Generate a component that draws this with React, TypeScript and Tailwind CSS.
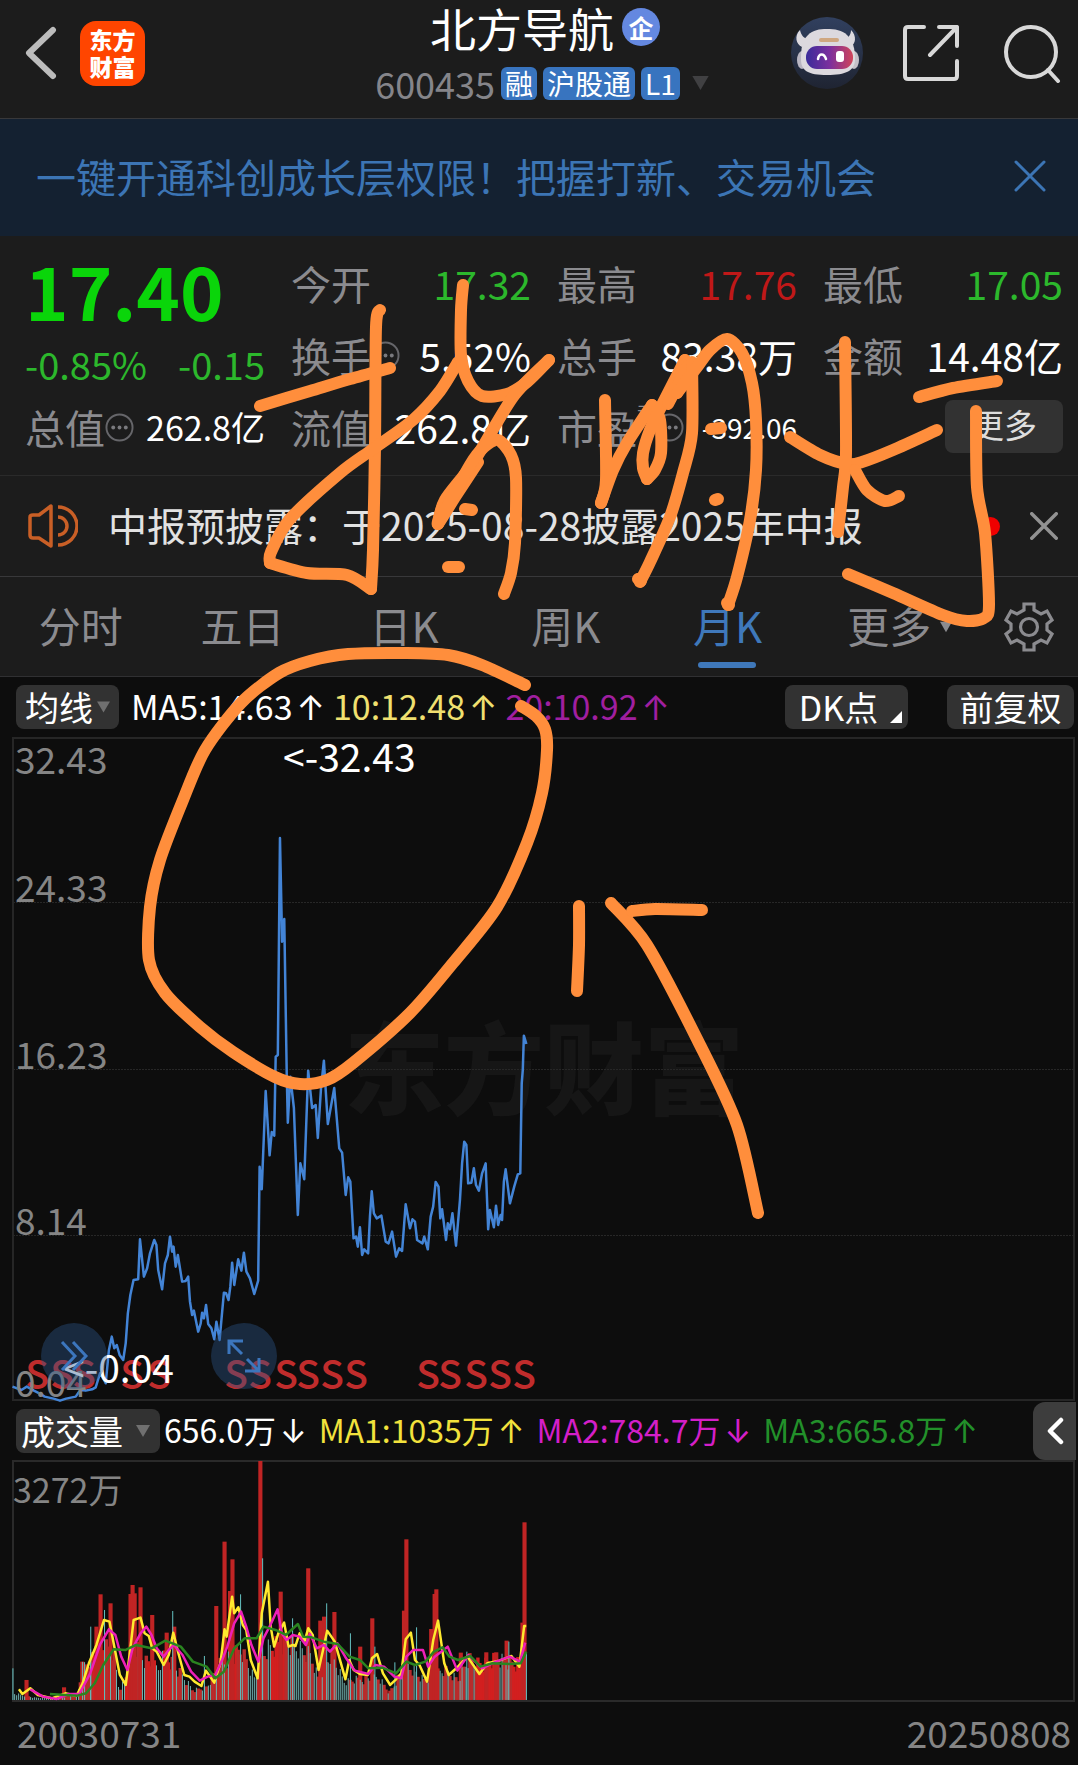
import { useState, type ReactNode } from 'react'

type Point = [number, number]

const TABS = ['分时', '五日', '日K', '周K', '月K']

// price line, 2.8 units per px across, 3 units per px down, origin at y=1050
const PRICE_LINE =
    '35,1010 60,1020 75,1010 95,1022 110,1030 125,1040 150,1046 168,1052 185,1046 212,1040 225,1020 240,1022 258,1018 268,1012 280,970 290,985 296,1000 305,900 313,860 320,895 327,885 335,915 345,930 352,880 358,790 365,735 374,690 387,688 392,568 403,680 412,655 420,610 432,570 438,585 443,660 454,718 462,640 470,615 476,560 482,605 486,590 492,650 498,615 510,695 520,693 527,680 532,755 538,795 543,782 555,845 562,820 566,788 571,805 577,765 583,822 592,835 600,868 606,815 615,870 627,728 633,730 640,750 645,710 650,638 656,705 667,628 676,662 683,608 690,665 700,685 712,732 723,692 727,350 733,418 744,123 755,316 761,246 768,257 772,20 778,15 784,-636 790,-325 796,-393 803,75 806,218 813,80 823,174 834,495 841,340 852,388 863,62 874,174 884,165 890,264 899,114 907,32 918,222 936,114 950,295 958,308 968,435 975,382 981,395 990,565 997,560 1002,590 1008,532 1014,615 1020,598 1031,610 1036,500 1041,424 1047,490 1055,505 1068,497 1080,575 1088,580 1098,545 1109,620 1118,595 1126,603 1136,463 1148,535 1155,508 1162,515 1168,570 1183,580 1188,560 1198,598 1206,500 1213,470 1220,396 1228,410 1233,505 1238,478 1249,570 1254,520 1260,538 1267,490 1277,587 1288,450 1294,340 1300,275 1306,285 1311,400 1320,398 1327,355 1333,405 1341,422 1350,370 1360,340 1367,538 1372,480 1383,532 1389,467 1395,525 1402,495 1406,510 1411,395 1416,358 1428,460 1440,410 1450,373 1457,370 1461,100 1464,60 1467,-43 1474,-18'

const SELL_MARKS = [37, 62, 84, 132, 159, 236, 260, 286, 308, 332, 356, 428, 450, 476, 500, 524]

// volume data, 2.904 units per px across, 3 units per px down, origin at y=1400
const VOL_RED: Point[] = [
    [77, 840], [186, 862], [239, 785], [280, 680], [292, 583], [321, 610], [379, 582], [385, 555], [391, 580],
    [408, 562], [442, 645], [484, 698], [506, 680], [628, 618], [652, 425], [668, 573], [675, 478], [756, 183],
    [815, 575], [895, 505], [930, 662], [941, 650], [971, 636], [1046, 740], [1081, 655], [1173, 632], [1180, 418],
    [1252, 687], [1262, 582], [1267, 568], [1338, 758], [1412, 757], [1441, 757], [1471, 722], [1517, 668], [1523, 367],
]

const VOL_TEAL: Point[] = [
    [37, 805], [263, 680], [303, 630], [501, 633], [593, 768], [698, 583], [762, 475], [849, 655], [948, 610],
    [1017, 700], [1088, 740], [1146, 787], [1209, 682], [1355, 755], [1477, 725], [1528, 758],
]

const VOL_BASE: Point[] = [
    [40, 880], [100, 893], [180, 893], [225, 880], [240, 800], [290, 740], [330, 760], [345, 870], [365, 840],
    [385, 730], [420, 790], [460, 810], [480, 760], [520, 810], [560, 870], [600, 860], [640, 790], [700, 750],
    [740, 840], [770, 750], [830, 730], [900, 770], [925, 840], [960, 770], [1000, 850], [1040, 840], [1100, 830],
    [1130, 880], [1180, 790], [1230, 840], [1290, 810], [1330, 840], [1360, 780], [1400, 800], [1440, 780],
    [1500, 800], [1528, 760],
]

const SOLID_RED = [[272, 300], [366, 396], [430, 448], [474, 500], [664, 690], [785, 830], [1255, 1275], [1385, 1435], [1488, 1528]]
const ALL_TEAL = [[36, 70], [90, 170], [450, 470], [716, 740], [850, 872], [978, 1005]]

const MA1_LINE =
    '55,868 65,882 88,865 110,885 150,895 190,880 222,888 240,850 258,790 280,735 302,660 318,665 330,730 348,825 365,855 378,750 388,660 408,653 420,700 432,708 442,745 455,755 475,795 490,765 503,698 518,760 535,825 550,830 565,845 585,858 598,812 622,848 640,790 652,688 658,710 674,590 680,640 692,622 705,675 715,690 728,780 748,835 760,640 778,545 786,680 796,740 808,700 825,668 838,740 850,735 858,738 870,700 885,722 895,685 908,705 925,810 938,750 950,692 972,725 990,790 1003,838 1014,780 1027,810 1045,822 1068,825 1080,775 1095,762 1112,820 1133,855 1150,838 1165,820 1178,718 1193,698 1205,780 1218,795 1240,845 1258,720 1272,662 1290,790 1303,825 1325,805 1357,770 1392,822 1415,790 1450,782 1485,768 1508,800 1522,678 1528,678'
const MA2_LINE =
    '88,868 125,890 165,897 200,882 230,882 262,820 290,735 316,688 335,705 352,770 370,810 385,745 408,700 425,680 440,705 455,745 475,770 490,750 505,735 530,765 555,815 580,842 603,830 625,825 645,780 660,740 680,670 700,635 715,680 730,735 750,785 765,715 785,675 806,628 818,700 832,720 850,705 870,710 888,735 900,702 920,745 940,735 958,755 980,730 1005,775 1030,812 1070,822 1090,795 1115,800 1145,830 1165,835 1180,770 1200,750 1228,750 1243,800 1262,770 1300,740 1328,812 1360,765 1400,805 1440,785 1480,770 1510,785 1525,728'
const MA3_LINE =
    '145,882 190,885 225,887 250,880 275,850 300,795 330,748 365,750 395,735 440,745 480,722 525,740 560,785 600,800 625,835 650,815 680,745 710,715 745,715 765,680 800,690 830,705 865,672 880,710 905,712 940,725 980,732 1015,770 1045,780 1070,805 1110,803 1150,820 1180,785 1205,795 1235,785 1260,755 1285,742 1305,770 1330,780 1365,768 1395,800 1430,790 1480,792 1512,790 1528,755'

const INK: Point[][] = [
    [[260, 406], [310, 391], [350, 379], [390, 368]],
    [[380, 310], [376, 327], [375, 447], [373, 550], [371, 589]],
    [[371, 589], [347, 575], [307, 573], [270, 563]],
    [[270, 563], [271, 552], [290, 519], [340, 473], [373, 449], [413, 420], [440, 391], [458, 362]],
    [[463, 285], [461, 310], [461, 355], [468, 381], [482, 396], [507, 394], [527, 382], [549, 360]],
    [[549, 360], [513, 397], [473, 463], [445, 500], [438, 524]],
    [[442, 508], [438, 524], [455, 497], [478, 462]],
    [[438, 524], [470, 465], [484, 447], [498, 440], [511, 455], [516, 478], [515, 543], [511, 573], [504, 594]],
    [[465, 509], [472, 510]],
    [[448, 567], [459, 567]],
    [[605, 400], [606, 480], [601, 503]],
    [[601, 503], [613, 470], [627, 443], [652, 405]],
    [[652, 405], [660, 420], [661, 453], [655, 470], [647, 479]],
    [[647, 479], [643, 468], [643, 453], [650, 430], [663, 403], [685, 360]],
    [[685, 360], [677, 393]],
    [[668, 404], [688, 366]],
    [[692, 362], [692, 433], [683, 473], [670, 517], [650, 562], [640, 582]],
    [[638, 579], [641, 581]],
    [[677, 393], [697, 367], [710, 350], [727, 339], [742, 353], [752, 383], [756, 420], [756, 470], [750, 520], [737, 577], [728, 605]],
    [[727, 603], [729, 605]],
    [[711, 429], [721, 428]],
    [[715, 500], [718, 499]],
    [[790, 437], [820, 455], [847, 464], [862, 462], [893, 450], [937, 430]],
    [[845, 342], [846, 453], [843, 487], [838, 532]],
    [[855, 470], [867, 490], [885, 501], [899, 496]],
    [[919, 397], [953, 388], [997, 381]],
    [[976, 411], [977, 487], [985, 533], [989, 605], [984, 618], [967, 621], [943, 615], [893, 593], [848, 574]],
    [[525, 685], [482, 665], [448, 655], [406, 653], [348, 654], [310, 661], [279, 673], [241, 703], [205, 750], [183, 800], [160, 860], [150, 907], [149, 960], [165, 993], [200, 1027], [233, 1052], [275, 1077], [300, 1084], [327, 1080], [353, 1063], [410, 1013], [453, 963], [497, 907], [527, 843], [542, 793], [547, 750], [545, 729], [536, 716], [521, 706]],
    [[579, 906], [579, 945], [577, 991]],
    [[611, 903], [647, 945], [698, 1041], [737, 1125], [758, 1213]],
    [[632, 911], [655, 909], [702, 910]],
]

function smoothPath(points: Point[]) {
    let d = `M${points[0][0]} ${points[0][1]}`
    for (let i = 0; i < points.length - 1; i++) {
        const prev = points[i - 1] ?? points[i]
        const a = points[i]
        const b = points[i + 1]
        const next = points[i + 2] ?? b
        d += `C${a[0] + (b[0] - prev[0]) / 7} ${a[1] + (b[1] - prev[1]) / 7} ${b[0] - (next[0] - a[0]) / 7} ${b[1] - (next[1] - a[1]) / 7} ${b[0]} ${b[1]}`
    }
    return d
}

function baseAt(x: number) {
    for (let i = 1; i < VOL_BASE.length; i++) {
        const [x0, y0] = VOL_BASE[i - 1]
        const [x1, y1] = VOL_BASE[i]
        if (x <= x1) return y0 + ((y1 - y0) * (x - x0)) / (x1 - x0)
    }
    return 800
}

const inside = (ranges: number[][], x: number) => ranges.some(([from, to]) => x >= from && x <= to)

const fillBars = Array.from({ length: 256 }, (_, i) => {
    const x = 42 + i * 5.8
    const noise = ((i * 73 + 29) % 97) / 97
    const red = inside(SOLID_RED, x) || (!inside(ALL_TEAL, x) && (i * 37 + 11) % 53 < 27)
    const height = (900 - baseAt(x)) * (0.75 + noise * 0.5)
    return { x, y: 900 - height, red }
})

function Caret({ className }: { className: string }) {
    return (
        <svg viewBox="0 0 14 12" className={className} fill="currentColor" aria-hidden="true">
            <path d="M0 0h14L7 12z" />
        </svg>
    )
}

function Cross({ className, width }: { className: string; width: number }) {
    return (
        <svg viewBox="0 0 32 32" className={className} fill="none" stroke="currentColor" strokeWidth={width} strokeLinecap="round" aria-hidden="true">
            <path d="M2 2l28 28M30 2L2 30" />
        </svg>
    )
}

function Dots() {
    return (
        <svg viewBox="0 0 30 30" className="w-[29px] h-[29px] shrink-0" fill="none" stroke="#66666a" strokeWidth="2" aria-hidden="true">
            <circle cx="15" cy="15" r="13.5" />
            <g fill="#7a7a7e" stroke="none">
                <circle cx="8.5" cy="15" r="2" />
                <circle cx="15" cy="15" r="2" />
                <circle cx="21.5" cy="15" r="2" />
            </g>
        </svg>
    )
}

function Robot() {
    return (
        <svg viewBox="0 0 72 72" className="w-[72px] h-[72px]" aria-hidden="true">
            <defs>
                <linearGradient id="sky" x1="0" y1="0" x2="0" y2="1">
                    <stop offset="0" stopColor="#31405f" />
                    <stop offset="1" stopColor="#1f2432" />
                </linearGradient>
                <linearGradient id="visor" x1="0" y1="0" x2="1" y2="0">
                    <stop offset="0" stopColor="#3a2c9a" />
                    <stop offset="0.5" stopColor="#7b2f9e" />
                    <stop offset="1" stopColor="#d0455a" />
                </linearGradient>
            </defs>
            <circle cx="36" cy="36" r="36" fill="url(#sky)" />
            <g fill="#dcd9de">
                <path d="M9 13c-6 6-4 14 2 17l7-8c-5 0-8-4-9-9zM60 13c6 6 5 14-1 17l-7-8c5 0 8-4 8-9z" />
                <ellipse cx="11" cy="43" rx="5" ry="9" fill="#b9b6c2" />
                <ellipse cx="63" cy="43" rx="5" ry="9" fill="#c4c0c8" />
                <path d="M10 42c0-11 1-18 7-24 5-5 11-6 19-6s15 1 20 6c6 6 8 13 8 24 0 12-9 16-28 16S10 54 10 42z" />
            </g>
            <rect x="28" y="21" width="20" height="4" rx="2" fill="#cfa780" />
            <rect x="15" y="29" width="47" height="23" rx="11" fill="url(#visor)" />
            <path d="M27 42c1-6 6-6 8 0" fill="none" stroke="#fff" strokeWidth="2.5" strokeLinecap="round" />
            <rect x="45" y="34" width="8" height="11" rx="3" fill="#fff" />
        </svg>
    )
}

function Badge({ children }: { children: ReactNode }) {
    return <span className="flex items-center h-[33px] px-1 rounded-md bg-[#3874bf] text-[28px] leading-none text-white">{children}</span>
}

function Arrow({ down }: { down?: boolean }) {
    return <span className="ml-1 font-[Inter,sans-serif]">{down ? '↓' : '↑'}</span>
}

interface StatProps {
    label: string
    value: string
    info?: boolean
    sup?: string
    valueClass?: string
}

function Stat({ label, value, info, sup, valueClass = 'text-[39px] text-white' }: StatProps) {
    return (
        <div className="flex items-center h-[72px] whitespace-nowrap">
            <dt className="flex items-center text-[40px] text-[#8b8b8f]">
                {label}
                {sup && <sup className="self-start -top-1 text-[18px] leading-none">{sup}</sup>}
                {info && <Dots />}
            </dt>
            <dd className={`ml-auto ${valueClass}`}>{value}</dd>
        </div>
    )
}

function Header() {
    return (
        <header className="grid grid-cols-[1fr_auto_1fr] items-center h-[119px] pl-[25px] pr-[17px] border-b border-[#38383a]">
            <div className="flex items-center gap-[23px] pb-3">
                <button aria-label="返回">
                    <svg viewBox="0 0 32 54" className="w-8 h-[54px]" fill="none" stroke="#bcbcbc" strokeWidth="6" strokeLinecap="round" strokeLinejoin="round">
                        <path d="M28 4L4 27l24 23" />
                    </svg>
                </button>
                <a href="#home" className="grid place-items-center w-[65px] h-[65px] rounded-2xl bg-[#ff4500] text-[23px] leading-[27px] font-black text-white text-center">
                    <span>东方<br />财富</span>
                </a>
            </div>
            <div className="flex flex-col items-center gap-3 pb-4">
                <h1 className="flex items-center gap-2 pl-1 text-[46px] leading-[52px] text-white">
                    北方导航
                    <span className="grid place-items-center w-[38px] h-[38px] rounded-full bg-[#6488e0] text-[25px] leading-none font-bold">企</span>
                </h1>
                <div className="flex items-center gap-[6px] text-[36px] leading-[36px] text-[#85858a]">
                    600435
                    <Badge>融</Badge>
                    <Badge>沪股通</Badge>
                    <Badge>L1</Badge>
                    <button aria-label="展开标签" className="ml-1 text-[#404042]"><Caret className="w-[21px] h-[14px]" /></button>
                </div>
            </div>
            <div className="flex items-center justify-end gap-10 pb-3">
                <button aria-label="智能助手"><Robot /></button>
                <button aria-label="分享">
                    <svg viewBox="0 0 56 56" className="w-14 h-14" fill="none" stroke="#d8d8d8" strokeWidth="4" strokeLinecap="round" strokeLinejoin="round">
                        <path d="M21 2H5Q2 2 2 5v46q0 3 3 3h46q3 0 3-3V36M36 2h18v19M54 2L27 30" />
                    </svg>
                </button>
                <button aria-label="搜索" className="ml-1">
                    <svg viewBox="0 0 58 60" className="w-[58px] h-[60px]" fill="none" stroke="#d8d8d8" strokeWidth="4" strokeLinecap="round">
                        <circle cx="28" cy="29" r="25" />
                        <path d="M45 47l10 11" />
                    </svg>
                </button>
            </div>
        </header>
    )
}

function PriceChart() {
    return (
        <div className="relative ml-3 mr-[3px]">
            <svg viewBox="12 737 1063 664" className="block w-full h-auto overflow-visible font-['Noto_Sans_CJK_SC',sans-serif]">
                <text x="344" y="1107" fontSize="100" fontWeight="900" fill="#161616">东方财富</text>
                <rect x="13" y="738" width="1061" height="662" fill="none" stroke="#262626" strokeWidth="2" />
                <g stroke="#272727" strokeWidth="1" strokeDasharray="2 1">
                    <path d="M13 902.5h1061M13 1069.5h1061M13 1235.5h1061" />
                </g>
                <g fontSize="39" fontWeight="500" fill="#c02c2c" textAnchor="middle">
                    {SELL_MARKS.map((x) => (
                        <text key={x} x={x} y="1389">S</text>
                    ))}
                </g>
                <g transform="translate(0 1050) scale(0.3571 0.3333)">
                    <polyline points={PRICE_LINE} fill="none" stroke="#4384d6" strokeWidth="2.5" vectorEffect="non-scaling-stroke" strokeLinejoin="round" />
                </g>
                <g fontSize="37" fill="#858585">
                    <text x="15" y="774">32.43</text>
                    <text x="15" y="902">24.33</text>
                    <text x="15" y="1069">16.23</text>
                    <text x="15" y="1235">8.14</text>
                    <text x="15" y="1397">0.04</text>
                </g>
                <g fontSize="39" fill="#fff">
                    <text x="283" y="772">&lt;-32.43</text>
                    <text x="63" y="1383">&lt;-0.04</text>
                </g>
            </svg>
            <button aria-label="快进" className="absolute left-[29px] bottom-[12px] grid place-items-center w-[66px] h-[66px] rounded-full bg-[rgba(45,88,140,0.4)]">
                <svg viewBox="0 0 30 34" className="w-[30px] h-[34px]" fill="none" stroke="#3c76bd" strokeWidth="3">
                    <path d="M3 3l13 14L3 31M14 3l13 14-13 14" />
                </svg>
            </button>
            <button aria-label="全屏" className="absolute left-[199px] bottom-[12px] grid place-items-center w-[66px] h-[66px] rounded-full bg-[rgba(45,88,140,0.4)]">
                <svg viewBox="0 0 36 36" className="w-9 h-9" fill="none" stroke="#3c76bd" strokeWidth="3">
                    <path d="M3 16V3h14M3 3l13 13M33 20v13H19M33 33L21 21" />
                </svg>
            </button>
        </div>
    )
}

function VolumeChart() {
    return (
        <div className="ml-3 mr-[3px]">
            <svg viewBox="12 1460 1063 242" className="block w-full h-auto overflow-visible font-['Noto_Sans_CJK_SC',sans-serif]">
                <rect x="13" y="1461" width="1061" height="240" fill="none" stroke="#2a2a2a" strokeWidth="2" />
                <text x="13" y="1503" fontSize="34" fill="#858585">3272万</text>
                <g transform="translate(0 1400) scale(0.3444 0.3333)">
                    {fillBars.filter((bar) => bar.red).map((bar) => (
                        <rect key={bar.x} x={bar.x - 5} y={bar.y} width="10" height={900 - bar.y} fill={inside(SOLID_RED, bar.x) ? '#d21f1f' : '#b82c2c'} />
                    ))}
                    {VOL_RED.map(([x, y]) => (
                        <rect key={x} x={x - 6} y={y} width="12" height={900 - y} fill="#c02424" />
                    ))}
                    {fillBars.filter((bar) => !bar.red).map((bar) => (
                        <rect key={bar.x} x={bar.x - 1} y={bar.y} width="3" height={900 - bar.y} fill="#6fb0ae" />
                    ))}
                    {VOL_TEAL.map(([x, y]) => (
                        <rect key={x} x={x - 1} y={y} width="3" height={900 - y} fill="#62bcbc" />
                    ))}
                    <g fill="none" strokeWidth="2.5" strokeLinejoin="round">
                        <polyline points={MA1_LINE} stroke="#ffe92e" vectorEffect="non-scaling-stroke" />
                        <polyline points={MA2_LINE} stroke="#ee1fb8" vectorEffect="non-scaling-stroke" />
                        <polyline points={MA3_LINE} stroke="#2a8420" vectorEffect="non-scaling-stroke" />
                    </g>
                </g>
            </svg>
        </div>
    )
}

function InkLayer() {
    return (
        <svg viewBox="0 0 1078 1765" className="absolute inset-x-0 top-0 w-full h-auto pointer-events-none" fill="none" stroke="#ff8e3c" strokeWidth="12" strokeLinecap="round" strokeLinejoin="round" aria-hidden="true">
            {INK.map((stroke, idx) => (
                <path key={idx} d={smoothPath(stroke)} />
            ))}
        </svg>
    )
}

export default function App() {
    const [activeTab, setActiveTab] = useState('月K')

    return (
        <div className="relative min-h-screen bg-[#0d0d0d] font-['Noto_Sans_CJK_SC',sans-serif] leading-none overflow-hidden">
            <div className="bg-[#1c1c1c]">
                <Header />

                <div className="flex items-center justify-between h-[117px] pl-9 pr-8 pb-1 bg-[#142131] text-[#3c75b5]">
                    <a href="#open" className="text-[40px] whitespace-nowrap">一键开通科创成长层权限！把握打新、交易机会</a>
                    <button aria-label="关闭横幅"><Cross className="w-8 h-8" width={3} /></button>
                </div>

                <section className="grid grid-cols-4 gap-x-[26px] h-[240px] pl-[25px] pr-[15px] pt-[11px] border-b border-[#2a2a2a]">
                    <div>
                        <p className="h-[90px] pt-1 text-[74px] leading-[76px] font-bold text-[#0ad50a]">17.40</p>
                        <p className="flex justify-between items-center h-[54px] text-[38px] text-[#2cb82c]">
                            <span>-0.85%</span>
                            <span>-0.15</span>
                        </p>
                        <dl>
                            <Stat label="总值" info value="262.8亿" valueClass="text-[34px] text-white" />
                        </dl>
                    </div>
                    <dl>
                        <Stat label="今开" value="17.32" valueClass="text-[39px] text-[#2cb82c]" />
                        <Stat label="换手" info value="5.52%" />
                        <Stat label="流值" value="262.8亿" />
                    </dl>
                    <dl>
                        <Stat label="最高" value="17.76" valueClass="text-[39px] text-[#c01818]" />
                        <Stat label="总手" value="83.38万" />
                        <Stat label="市盈" sup="动" info value="-392.06" valueClass="text-[28px] text-white" />
                    </dl>
                    <div>
                        <dl>
                            <Stat label="最低" value="17.05" valueClass="text-[39px] text-[#2cb82c]" />
                            <Stat label="金额" value="14.48亿" />
                        </dl>
                        <div className="flex items-center justify-end h-[70px]">
                            <button className="w-[118px] h-[53px] pb-1 rounded-lg bg-[#323232] text-[33px] text-[#dedede]">更多</button>
                        </div>
                    </div>
                </section>

                <div className="flex items-center h-[101px] pl-7 pr-5 border-b border-[#38383a]">
                    <svg viewBox="0 0 50 44" className="w-[50px] h-11 shrink-0" fill="none" stroke="#c95f26" strokeWidth="3.5" strokeLinejoin="round" aria-hidden="true">
                        <path d="M2 13q0-2 3-2h6L23 2v40L11 34H5q-3 0-3-3z" />
                        <path d="M30 3a19 19 0 010 38M30 13a9 9 0 010 18" />
                    </svg>
                    <a href="#report" className="ml-[30px] pb-1 text-[39px] text-[#e2e2e2] whitespace-nowrap">中报预披露：于2025-08-28披露2025年中报</a>
                    <span className="ml-auto w-[19px] h-[19px] rounded-full bg-[#f00000]" />
                    <button aria-label="关闭公告" className="ml-[30px] text-[#929292]"><Cross className="w-7 h-7" width={4} /></button>
                </div>

                <nav className="flex items-center h-[100px] pr-6 border-b border-[#303032] text-[42px] text-[#8b8b8f]">
                    <div className="grid grid-cols-6 flex-1 h-full">
                        {TABS.map((tab) => (
                            <button
                                key={tab}
                                onClick={() => setActiveTab(tab)}
                                className={`flex flex-col items-center justify-end gap-3 pb-2 ${activeTab === tab ? 'text-[#3f78ba]' : ''}`}
                            >
                                <span className="leading-[50px]">{tab}</span>
                                <span className={`w-[58px] h-[6px] rounded-full ${activeTab === tab ? 'bg-[#3f78ba]' : ''}`} />
                            </button>
                        ))}
                        <button className="relative flex items-center justify-center pb-1 leading-[50px]">
                            更多
                            <Caret className="absolute right-[18px] top-11 w-3 h-3" />
                        </button>
                    </div>
                    <button aria-label="设置" className="ml-[34px]">
                        <svg viewBox="0 0 50 50" className="w-[50px] h-[50px]" fill="none" stroke="#8b8b8f" strokeWidth="3.2" strokeLinejoin="miter">
                            <path d="M20 2h10v6l7 4 6-3 5 9-5 4v6l5 4-5 9-6-3-7 4v6H20v-6l-7-4-6 3-5-9 5-4v-6l-5-4 5-9 6 3 7-4z" />
                            <circle cx="25" cy="25" r="8.5" />
                        </svg>
                    </button>
                </nav>
            </div>

            <div className="flex items-center h-[60px] pl-4 pr-[4px] text-[34px] whitespace-nowrap">
                <button className="flex items-center justify-center gap-1 w-[103px] h-11 rounded-lg bg-[#323232] text-white">
                    均线<Caret className="w-[13px] h-3 text-[#707070]" />
                </button>
                <span className="ml-3 text-white">MA5:14.63<Arrow /></span>
                <span className="ml-2 text-[#f0e070]">10:12.48<Arrow /></span>
                <span className="ml-2 text-[#a01fa0]">20:10.92<Arrow /></span>
                <button className="relative ml-auto w-[123px] h-11 pr-4 rounded-lg bg-[#323232] text-white">
                    DK点
                    <svg viewBox="0 0 12 12" className="absolute right-[6px] bottom-[6px] w-3 h-3" fill="#fff"><path d="M12 0v12H0z" /></svg>
                </button>
                <button className="ml-[39px] w-[127px] h-11 rounded-lg bg-[#323232] text-white">前复权</button>
            </div>

            <PriceChart />

            <div className="flex items-center h-[59px] pl-4 pr-[2px] text-[32px] whitespace-nowrap">
                <button className="flex items-center justify-between w-[144px] h-11 pl-[5px] pr-[10px] rounded-lg bg-[#323232] text-[34px] text-white">
                    成交量<Caret className="w-[14px] h-3 text-[#707070]" />
                </button>
                <span className="ml-1 text-white">656.0万<Arrow down /></span>
                <span className="ml-3 text-[#f2e23c]">MA1:1035万<Arrow /></span>
                <span className="ml-3 text-[#d41fc8]">MA2:784.7万<Arrow down /></span>
                <span className="ml-3 text-[#22902a]">MA3:665.8万<Arrow /></span>
                <button aria-label="展开指标" className="grid place-items-center ml-auto w-[43px] h-[58px] rounded-l-xl bg-[#3d3d3d]">
                    <svg viewBox="0 0 18 28" className="w-[18px] h-7" fill="none" stroke="#fff" strokeWidth="4.5" strokeLinecap="round" strokeLinejoin="round">
                        <path d="M15 3L4 14l11 11" />
                    </svg>
                </button>
            </div>

            <VolumeChart />

            <div className="flex justify-between items-center h-16 pl-[17px] pr-[7px] pb-1 text-[37px] text-[#858585]">
                <span>20030731</span>
                <span>20250808</span>
            </div>

            <InkLayer />
        </div>
    )
}
